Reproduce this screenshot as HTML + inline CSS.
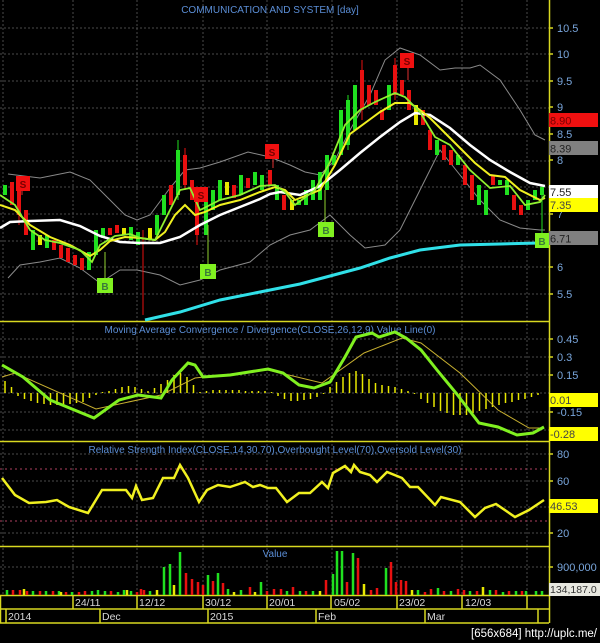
<!DOCTYPE html>
<html><head><meta charset="utf-8"><style>
html,body{margin:0;padding:0;background:#000;width:600px;height:643px;overflow:hidden}
svg{display:block}
text{font-family:"Liberation Sans",sans-serif}
</style></head><body>
<svg width="600" height="643" viewBox="0 0 600 643" xmlns="http://www.w3.org/2000/svg">
<rect width="600" height="643" fill="#000"/>
<!-- grids -->
<g stroke="#4a4a4a" stroke-width="1" stroke-dasharray="2,2" fill="none">
<path d="M0 28H549M0 54H549M0 81H549M0 108H549M0 134H549M0 161H549M0 187H549M0 214H549M0 241H549M0 267H549M0 294H549"/>
<path d="M0 339H549M0 357H549M0 375H549M0 393H549M0 412H549M0 430H549"/>
<path d="M0 454H549M0 481H549M0 507H549M0 533H549M0 567H549"/>
<path d="M3 0V595M73 0V595M137 0V595M203 0V595M267 0V595M332 0V595M397 0V595M462 0V595M527 0V595"/>
</g>
<g stroke="#b04060" stroke-width="1" stroke-dasharray="2,3"><path d="M0 469H549M0 521H549"/></g>
<!-- panel borders -->
<g stroke="#d8d820" stroke-width="1.5" fill="none">
<path d="M0 321.5H549M0 441.5H549M0 546.5H549M0 595.5H549M0 609H549M0 623H549M549.5 0V623M0.5 595V623"/>
<path d="M73 595V609M137 595V609M203 595V609M267 595V609M331 595V609M397 595V609M462 595V609M527 595V609"/>
<path d="M6 609V623M100 609V623M208 609V623M316 609V623M425 609V623M538 609V623"/>
<path d="M549 28h4M549 54h4M549 81h4M549 107h4M549 134h4M549 160h4M549 187h4M549 214h4M549 267h4M549 294h4M549 339h4M549 357h4M549 375h4M549 412h4M549 454h4M549 481h4M549 533h4M549 567h4"/>
</g>
<!-- title -->
<text x="270" y="13" fill="#5b8ed6" font-size="10" text-anchor="middle">COMMUNICATION AND SYSTEM [day]</text>
<!-- price axis labels -->
<g fill="#79a6dc" font-size="11">
<text x="557" y="32">10.5</text><text x="557" y="58">10</text><text x="557" y="85">9.5</text><text x="557" y="111">9</text><text x="557" y="138">8.5</text><text x="557" y="164">8</text><text x="557" y="218">7</text><text x="557" y="271">6</text><text x="557" y="298">5.5</text>
<text x="557" y="343">0.45</text><text x="557" y="361">0.3</text><text x="557" y="379">0.15</text><text x="557" y="416">-0.15</text>
<text x="557" y="458">80</text><text x="557" y="485">60</text><text x="557" y="537">20</text>
<text x="557" y="571">900,000</text>
</g>
<!-- value boxes -->
<rect x="549" y="113" width="49" height="14" fill="#f01010"/><text x="550" y="124.5" font-size="11" fill="#700">8.90</text>
<rect x="549" y="141" width="49" height="14" fill="#808080"/><text x="550" y="152.5" font-size="11" fill="#222">8.39</text>
<rect x="549" y="185" width="49" height="13" fill="#fff"/><text x="550" y="196" font-size="11" fill="#222">7.55</text>
<rect x="549" y="198" width="49" height="14" fill="#ffff00"/><text x="550" y="209" font-size="11" fill="#444">7.35</text>
<rect x="549" y="231" width="49" height="14" fill="#808080"/><text x="550" y="242.5" font-size="11" fill="#222">6.71</text>
<rect x="549" y="393" width="49" height="14" fill="#ffff00"/><text x="550" y="404" font-size="11" fill="#444">0.01</text>
<rect x="549" y="427" width="49" height="14" fill="#ffff00"/><text x="550" y="438" font-size="11" fill="#444">-0.28</text>
<rect x="549" y="499" width="49" height="14" fill="#ffff00"/><text x="550" y="510" font-size="11" fill="#444">46.53</text>
<rect x="549" y="583" width="51" height="13" fill="#e8e8e0"/><text x="550" y="593" font-size="10.5" fill="#333">134,187.0</text>
<!-- bollinger -->
<g stroke="#8a8a8a" stroke-width="1" fill="none">
<polyline points="8,174 40,178 70,172 90,180 110,200 125,215 137,220 150,215 170,188 185,170 200,168 220,162 248,152 270,157 290,165 305,172 320,175 335,160 350,130 370,95 385,60 400,48 420,55 440,70 455,68 470,68 480,65 500,80 520,110 535,135 545,140"/>
<polyline points="8,278 20,265 40,262 60,258 80,268 100,283 120,270 137,270 160,275 180,285 200,280 220,270 250,262 270,245 290,235 310,230 330,215 350,235 365,248 385,245 400,230 420,190 440,150 460,175 480,200 500,220 520,228 540,230 545,230"/>
</g>
<!-- candles -->
<g stroke-width="4" fill="none">
<path stroke="#20e020" d="M5 185V195M33 230V250M47 235V248M89 252V270M96 230V255M103 228V238M131 227V240M138 232V245M157 215V235M164 195V215M178 150V195M206 195V235M213 190V210M220 180V200M241 175V195M255 172V185M262 175V190M277 185V200M299 200V205M306 190V205M313 180V200M320 172V200M327 155V190M334 155V165M341 110V155M348 100V145M355 85V130M389 85V110M437 140V155M458 155V165M479 185V205M486 190V215M500 180V185M507 180V195M528 200V210M535 190V200M542 187V195"/>
<path stroke="#e81010" d="M12 182V205M19 190V215M26 210V235M54 240V250M61 245V258M68 248V262M75 255V265M82 258V270M110 228V235M117 225V233M171 185V205M185 155V185M192 180V200M197 200V235M234 185V198M248 178V188M270 170V185M284 195V210M362 70V110M369 85V105M376 90V105M382 110V120M395 65V95M402 80V95M409 90V110M423 110V125M430 130V150M444 145V160M451 150V165M465 165V185M472 175V200M493 175V185M514 195V210M521 205V215"/>
<path stroke="#e8e800" d="M40 235V245M124 228V235M150 228V240M227 182V195M292 200V210M416 105V125"/>
</g>
<g stroke-width="1" fill="none">
<path stroke="#e81010" d="M143 230V315M362 60V120M395 58V100M19 185V225M185 148V190M197 195V245"/>
<path stroke="#20e020" d="M178 140V200M348 95V150M542 185V240"/>
</g>
<!-- cyan MA -->
<polyline fill="none" stroke="#30e0e8" stroke-width="3" points="145,320 180,312 220,300 260,292 300,284 330,276 360,268 390,258 420,250 460,245 500,244 540,243"/>
<!-- white MA -->
<polyline fill="none" stroke="#fff" stroke-width="2.5" points="0,228 10,222 30,221 60,220 80,226 100,236 120,242 140,243 160,243 180,237 200,225 220,215 240,207 260,199 270,194 280,192 300,195 320,186 340,170 360,153 380,137 400,122 415,113 430,115 450,128 470,145 490,160 510,172 530,183 545,186"/>
<!-- yellow MA -->
<polyline fill="none" stroke="#f0f020" stroke-width="2" points="0,205 15,210 30,225 50,237 70,245 90,256 100,250 110,241 125,237 140,238 155,240 165,232 175,215 185,205 195,215 205,212 220,205 240,200 260,192 275,187 285,190 295,200 320,190 335,165 350,134 365,123 380,112 395,103 410,103 420,110 430,118 445,133 460,148 475,163 490,175 505,177 520,190 540,200 545,198"/>
<!-- green MA -->
<polyline fill="none" stroke="#90f030" stroke-width="1.8" points="0,195 15,205 30,230 45,240 60,243 80,250 92,262 100,245 115,236 130,234 140,238 155,240 170,210 180,190 190,188 200,210 210,205 220,200 240,195 260,186 275,185 285,192 295,205 315,190 330,162 345,125 360,110 375,102 395,93 405,97 420,112 435,137 450,145 470,170 490,188 510,186 525,205 540,202 545,195"/>
<!-- signals -->
<g stroke="#90d030" stroke-width="1"><path d="M105 252V278M208 225V264M325 190V222"/></g>
<g stroke="#e03030" stroke-width="1"><path d="M273 150V168M408 60V80M22 185V195"/></g>
<g font-size="10" text-anchor="middle" font-weight="bold">
<rect x="16" y="176" width="14" height="15" fill="#f01010"/><text x="23" y="188" fill="#700">S</text>
<rect x="194" y="187" width="14" height="15" fill="#f01010"/><text x="201" y="199" fill="#700">S</text>
<rect x="265" y="144" width="14" height="15" fill="#f01010"/><text x="272" y="156" fill="#700">S</text>
<rect x="400" y="53" width="14" height="15" fill="#f01010"/><text x="407" y="65" fill="#700">S</text>
<rect x="97" y="278" width="16" height="15" fill="#80f020"/><text x="105" y="290" fill="#3a7a3a">B</text>
<rect x="200" y="264" width="16" height="15" fill="#80f020"/><text x="208" y="276" fill="#3a7a3a">B</text>
<rect x="318" y="222" width="16" height="15" fill="#80f020"/><text x="326" y="234" fill="#3a7a3a">B</text>
<rect x="535" y="233" width="14" height="15" fill="#80f020"/><text x="542" y="245" fill="#3a7a3a">B</text>
</g>
<!-- MACD -->
<text x="270" y="333" fill="#5b8ed6" font-size="10" text-anchor="middle">Moving Average Convergence / Divergence(CLOSE,26,12,9) Value Line(0)</text>
<path stroke="#e8e800" stroke-width="1.5" fill="none" d="M5 393v-12M11.5 393v-6M18 393v3M24.5 393v6M31 393v8M37.5 393v10M44 393v11M50.5 393v12M57 393v12M63.5 393v12M70 393v11M76.5 393v10M83 393v9M89.5 393v5M96 393v2M102.5 393v-1M109 393v-2M115.5 393v-4M122 393v-6M128.5 393v-7M135 393v-6M141.5 393v-4M148 393v-2M154.5 393v-5M161 393v-9M167.5 393v-13M174 393v-18M180.5 393v-20M187 393v-16M193.5 393v-8M200 393v-1M206.5 393v-2M213 393v-3M219.5 393v-3M226 393v-3M232.5 393v-3M239 393v-3M245.5 393v-2M252 393v-2M258.5 393v-2M265 393v-2M271.5 393v-1M278 393v3M284.5 393v6M291 393v8M297.5 393v8M304 393v7M310.5 393v6M317 393v4M323.5 393v1M330 393v-6M336.5 393v-11M343 393v-16M349.5 393v-20M356 393v-22M362.5 393v-19M369 393v-14M375.5 393v-10M382 393v-8M388.5 393v-7M395 393v-6M401.5 393v-4M408 393v-2M414.5 393v1M421 393v6M427.5 393v10M434 393v14M440.5 393v18M447 393v20M453.5 393v22M460 393v22M466.5 393v22M473 393v20M479.5 393v18M486 393v16M492.5 393v14M499 393v12M505.5 393v10M512 393v9M518.5 393v7M525 393v6M531.5 393v4M538 393v2"/>
<polyline fill="none" stroke="#c8b030" stroke-width="1" points="2,377 15,373 96,409 161,395 195,378 268,370 322,383 364,353 402,338 421,343 460,373 498,410 529,428 544,428"/>
<polyline fill="none" stroke="#80f020" stroke-width="3" points="2,365 23,377 50,400 94,418 119,400 138,395 161,398 172,380 188,363 195,365 203,377 230,375 268,369 283,373 299,385 314,388 330,382 345,357 356,337 372,333 379,337 395,332 406,338 421,350 437,370 456,393 479,423 498,427 517,435 533,433 544,427"/>
<!-- RSI -->
<text x="275" y="453" fill="#5b8ed6" font-size="10" text-anchor="middle">Relative Strength Index(CLOSE,14,30,70),Overbought Level(70),Oversold Level(30)</text>
<polyline fill="none" stroke="#f0f020" stroke-width="2.5" points="2,478 15,495 29,503 46,502 57,500 69,507 88,513 102,490 126,490 132,498 136,486 142,500 153,498 163,478 174,478 180,465 188,478 199,502 207,490 218,485 230,487 245,482 253,487 260,485 268,488 276,488 287,502 299,493 310,493 322,482 328,488 333,473 345,466 351,472 354,465 360,472 370,475 377,482 387,472 402,478 410,487 418,487 435,505 441,497 460,502 475,517 485,508 496,504 515,517 529,510 544,500"/>
<!-- Volume -->
<text x="275" y="557" fill="#5b8ed6" font-size="10" text-anchor="middle">Value</text>
<g stroke-width="2.5" fill="none">
<path stroke="#20e020" d="M7 595v-5M33 595v-4M46 595v-4M59 595v-4M72 595v-3M92 595v-4M98 595v-5M105 595v-4M118 595v-3M124 595v-5M131 595v-4M150 595v-4M164 595v-28M170 595v-31M180 595v-43M208 595v-20M218 595v-22M228 595v-6M241 595v-5M261 595v-13M287 595v-4M300 595v-4M313 595v-4M333 595v-21M337 595v-44M342 595v-44M353 595v-42M386 595v-27M418 595v-5M438 595v-7M451 595v-4M470 595v-4M490 595v-5M503 595v-3M516 595v-4M526 595v-4M536 595v-4M542 595v-4"/>
<path stroke="#e81010" d="M13 595v-5M20 595v-5M27 595v-4M40 595v-4M53 595v-4M66 595v-3M79 595v-3M85 595v-4M111 595v-4M137 595v-3M141 595v-6M144 595v-5M186 595v-22M192 595v-16M198 595v-13M203 595v-10M213 595v-14M223 595v-12M250 595v-8M267 595v-4M274 595v-6M281 595v-6M293 595v-8M306 595v-4M326 595v-15M347 595v-13M358 595v-37M371 595v-5M377 595v-7M391 595v-33M396 595v-13M401 595v-15M406 595v-14M425 595v-3M431 595v-6M444 595v-4M458 595v-6M464 595v-5M477 595v-4M496 595v-5M509 595v-4M522 595v-4"/>
<path stroke="#e8e800" d="M24 595v-6M61 595v-3M127 595v-5M157 595v-5M174 595v-10M234 595v-3M255 595v-3M320 595v-4M364 595v-11M412 595v-5M483 595v-8"/>
</g>
<!-- dates -->
<g fill="#d8d8d8" font-size="10.5">
<text x="75" y="606">24/11</text><text x="139" y="606">12/12</text><text x="205" y="606">30/12</text><text x="269" y="606">20/01</text><text x="334" y="606">05/02</text><text x="399" y="606">23/02</text><text x="465" y="606">12/03</text>
<text x="8" y="620">2014</text><text x="102" y="620">Dec</text><text x="210" y="620">2015</text><text x="318" y="620">Feb</text><text x="427" y="620">Mar</text>
</g>
<text x="597" y="637" fill="#fff" font-size="11.5" text-anchor="end" font-family="Liberation Mono,monospace">[656x684] http://uplc.me/</text>
</svg>
</body></html>
